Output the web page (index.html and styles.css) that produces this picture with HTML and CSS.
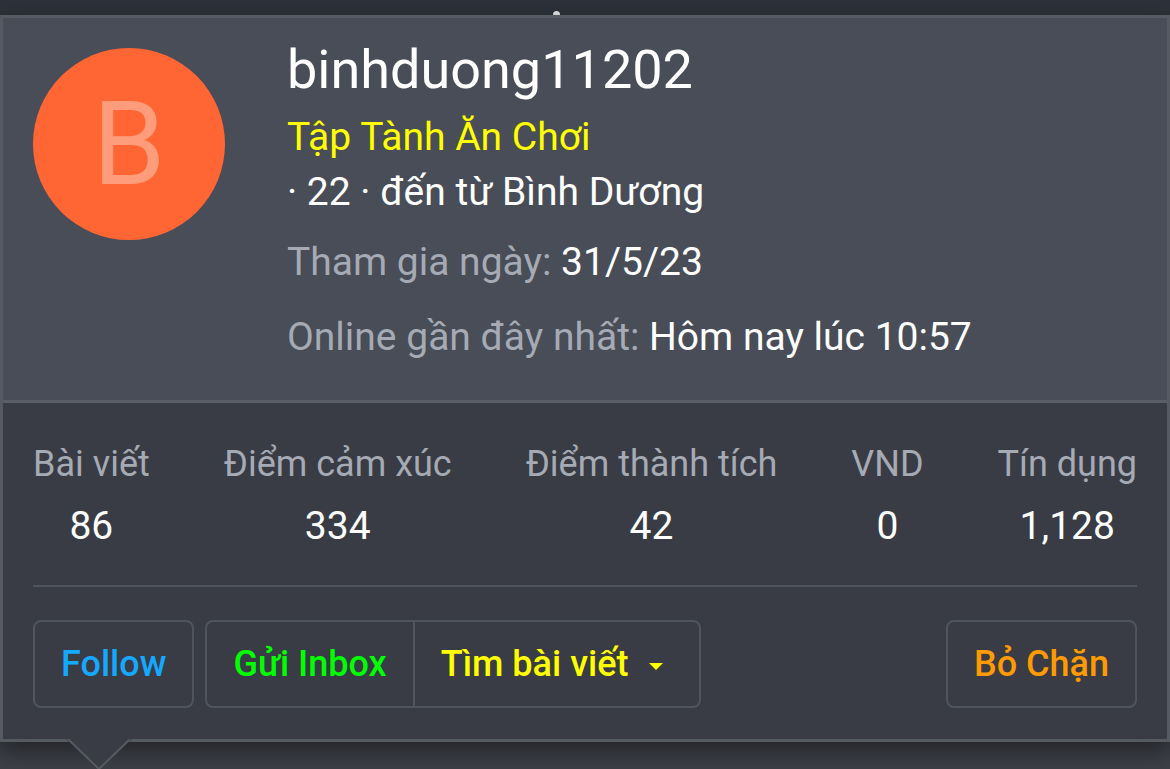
FILE: index.html
```html
<!DOCTYPE html>
<html lang="vi">
<head>
  <meta charset="UTF-8">
  <meta name="viewport" content="width=device-width, initial-scale=1.0">
  <title>binhduong11202 - Hồ sơ</title>
  <link rel="stylesheet" href="styles.css">
</head>
<body>
  <span class="peek"></span>
  <div class="tooltip">
    <div class="member-head">
      <div class="avatar">B</div>
      <div class="member-info">
        <h1 class="username">binhduong11202</h1>
        <div class="rank">Tập Tành Ăn Chơi</div>
        <div class="blurb">· 22 · đến từ Bình Dương</div>
        <div class="meta meta-join"><span class="muted">Tham gia ngày:</span> 31/5/23</div>
        <div class="meta meta-seen"><span class="muted">Online gần đây nhất:</span> Hôm nay lúc 10:57</div>
      </div>
    </div>

    <div class="member-body">
      <dl class="stats">
        <div class="stat"><dt>Bài viết</dt><dd>86</dd></div>
        <div class="stat"><dt>Điểm cảm xúc</dt><dd>334</dd></div>
        <div class="stat"><dt>Điểm thành tích</dt><dd>42</dd></div>
        <div class="stat"><dt>VND</dt><dd>0</dd></div>
        <div class="stat"><dt>Tín dụng</dt><dd>1,128</dd></div>
      </dl>

      <div class="actions">
        <button type="button" class="btn btn-follow">Follow</button>
        <div class="btn-group">
          <button type="button" class="btn btn-inbox">Gửi Inbox</button>
          <button type="button" class="btn btn-find">Tìm bài viết <span class="caret"></span></button>
        </div>
        <button type="button" class="btn btn-unblock">Bỏ Chặn</button>
      </div>
    </div>

    <svg class="arrow" width="66" height="32" viewBox="0 0 66 32">
      <polygon points="0,0 66,0 33,32" fill="#393c44"/>
      <polyline points="2,0 33,30 64,0" fill="none" stroke="#555962" stroke-width="2"/>
    </svg>
  </div>
</body>
</html>
```

FILE: styles.css
```css
body {
  margin: 0;
  padding-top: 15px;
  font-family: Roboto, "Liberation Sans", sans-serif;
  background: linear-gradient(#2d3139 0, #2d3139 15px, #3c3f46 15px);
  color: #fff;
  height: 754px;
  overflow: hidden;
}

.peek {
  position: absolute;
  left: 553px;
  top: 11px;
  width: 7px;
  height: 4px;
  background: #e8e8e8;
  border-radius: 4px 4px 0 0;
}

.tooltip {
  position: relative;
  width: 1164px;
  border: 3px solid #555a63;
  box-shadow: 0 8px 22px rgba(0, 0, 0, 0.45);
}

.member-head {
  display: flex;
  align-items: flex-start;
  gap: 62px;
  background: #484d57;
  padding: 22px 30px 35px 30px;
  border-bottom: 3px solid #5a5e67;
}

.avatar {
  flex: none;
  width: 192px;
  height: 192px;
  margin-top: 8px;
  border-radius: 50%;
  background: #ff6633;
  color: #ff9c7c;
  font-size: 117px;
  line-height: 192px;
  text-align: center;
}

.member-info {
  font-size: 39px;
  line-height: 55px;
}

.username {
  margin: 0;
  font-size: 54px;
  font-weight: 400;
  line-height: 60px;
  margin-bottom: 10px;
}

.rank {
  color: #ffff00;
}

.meta-join {
  margin-top: 15px;
}

.meta-seen {
  margin-top: 20px;
}

.muted {
  color: #a5aab4;
}

.member-body {
  background: #393c44;
  padding: 39px 30px 31px 30px;
}

.stats {
  display: flex;
  justify-content: space-between;
  margin: 0;
  padding-bottom: 37px;
  border-bottom: 2px solid #50545c;
}

.stat {
  text-align: center;
}

.stat dt {
  color: #a5aab4;
  font-size: 36px;
  line-height: 44px;
}

.stat dd {
  margin: 18px 0 0 0;
  font-size: 39px;
  line-height: 44px;
}

.actions {
  display: flex;
  align-items: center;
  gap: 11px;
  margin-top: 33px;
}

.btn {
  height: 88px;
  padding: 0 26px;
  background: transparent;
  border: 2px solid #50545c;
  border-radius: 8px;
  font-family: inherit;
  font-size: 36px;
  font-weight: 500;
}

.btn-follow { color: #14a8ff; }
.btn-inbox { color: #00ff00; }
.btn-find { color: #ffff00; padding-right: 36px; }
.btn-unblock { color: #ff9a00; margin-left: auto; }

.btn-group {
  display: flex;
}

.btn-group .btn-inbox {
  border-radius: 8px 0 0 8px;
}

.btn-group .btn-find {
  border-left: none;
  border-radius: 0 8px 8px 0;
}

.caret {
  display: inline-block;
  margin-left: 12px;
  vertical-align: middle;
  border-left: 7px solid transparent;
  border-right: 7px solid transparent;
  border-top: 7px solid #ffff00;
}

.arrow {
  position: absolute;
  left: 63px;
  bottom: -32px;
}
```
